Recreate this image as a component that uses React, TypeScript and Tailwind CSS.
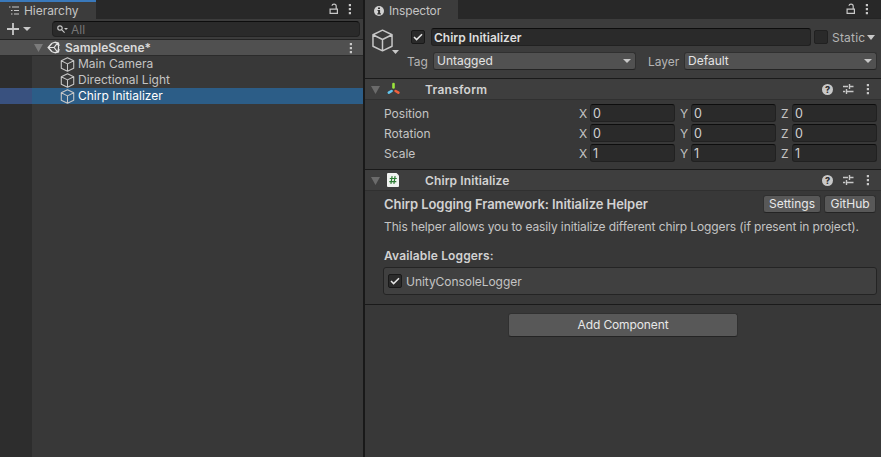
import type { ReactNode } from "react";

const Cube = ({ size, stroke = 1.1 }: { size: number; stroke?: number }) => (
  <svg width={size} height={size} viewBox="0 0 14 14" fill="none" stroke="#c8c8c8" strokeWidth={stroke} strokeLinejoin="round" className="shrink-0">
    <path d="M7 .7 12.8 3.5v7L7 13.3 1.2 10.5v-7z M1.2 3.5 7 6.4l5.8-2.9 M7 6.4v6.9" />
  </svg>
);

const Kebab = () => (
  <svg width="4" height="12" viewBox="0 0 4 12" fill="#c8c8c8" className="shrink-0">
    <path d="M.8 1h2.2v2.2H.8zM.8 5h2.2v2.2H.8zM.8 9h2.2v2.2H.8z" />
  </svg>
);

const Lock = () => (
  <svg width="10" height="12" viewBox="0 0 10 12" fill="none" stroke="#c8c8c8" strokeWidth="1.2" className="shrink-0">
    <path d="M1.1 6.1h7.3v4.3H1.1z M7.2 6V3.2Q7.2 1.2 5 1.2Q3.2 1.2 3 2.8" />
  </svg>
);

const Caret = ({ color = "#c8c8c8", w = 8, h = 4 }: { color?: string; w?: number; h?: number }) => (
  <svg width={w} height={h} viewBox="0 0 8 4" preserveAspectRatio="none" fill={color} className="shrink-0">
    <path d="M0 0h8L4 4z" />
  </svg>
);

const Check = () => (
  <span className="flex h-[14px] w-[14px] shrink-0 items-center justify-center rounded-[2px] border border-[#191919] bg-[#2a2a2a]">
    <svg width="10" height="8" viewBox="0 0 10 8" fill="none" stroke="#e6e6e6" strokeWidth="1.5">
      <path d="M1 4 3.6 6.6 9 1.2" />
    </svg>
  </span>
);

const UnityLogo = () => (
  <svg width="13" height="13" viewBox="0 0 13 13" fill="none" stroke="#e4e4e4" className="shrink-0">
    <path d="M5 2.2 1.2 6.5 5 10.8 M7.8 1.3 11.4 2.1 12 5.2 M7.8 11.7 11.4 10.9 12 7.8" strokeWidth="1.4" />
    <path d="M1.2 6.5h5.9 M7.1 6.5l3.5-4.6 M7.1 6.5l3.5 4.6 M5 2.2 8 1.3 M5 10.8l3 .9 M11 2.5l.6 4-.6 4" strokeWidth="1.2" />
  </svg>
);

const AxisIcon = () => (
  <svg width="14" height="14" viewBox="0 0 14 14" fill="none" strokeWidth="2.6" strokeLinecap="round" className="shrink-0">
    <path d="M6.5 2v3.4" stroke="#9be53c" />
    <path d="M4.6 9 1.8 10.7" stroke="#62c6ef" />
    <path d="m8.6 9 2.8 1.7" stroke="#f2613c" />
  </svg>
);

const ScriptIcon = () => (
  <svg width="12" height="14" viewBox="0 0 12 14" className="shrink-0">
    <path d="M1 0h8.5L12 2.5V13q0 1-1 1H1q-1 0-1-1V1q0-1 1-1z" fill="#f1f3f1" />
    <path d="M5.1 3.2 3.9 10.8 M8.1 3.2 6.9 10.8 M2.8 5.5h7 M2.3 8.6h7" stroke="#2f7d36" strokeWidth="1.2" fill="none" />
  </svg>
);

const HeaderTools = () => (
  <div className="ml-auto flex items-center pr-[11px]">
    <span className="mr-[9px] flex h-[11px] w-[11px] items-center justify-center rounded-full bg-[#c8c8c8] text-[9px] leading-none font-extrabold text-[#303030]">?</span>
    <svg width="12" height="12" viewBox="0 0 12 12" fill="none" stroke="#c8c8c8" strokeWidth="1.4" className="mr-[12px]">
      <path d="M1 3.5h5 M7.5 3.5h4 M7.5 1v5 M1 8.5h2.2 M4.5 8.5h7 M4.5 6v5" />
    </svg>
    <Kebab />
  </div>
);

const ComponentHeader = ({ icon, title }: { icon: ReactNode; title: ReactNode }) => (
  <div className="flex h-[21px] items-center border-b border-[#303030] bg-[#3e3e3e] pl-[6px]">
    <span className="flex pt-px"><Caret color="#6b6b6b" w={9} h={8} /></span>
    <span className="ml-[6px] flex w-[39px] pl-px">{icon}</span>
    <span className="pt-[2px] font-semibold tracking-[0.1px] text-[#d2d2d2]">{title}</span>
    <HeaderTools />
  </div>
);

const Field = ({ axis, value }: { axis: string; value: number }) => (
  <div className="flex w-[101px] items-center">
    <span className="w-[12px] pt-[2px] pl-px">{axis}</span>
    <span className="flex h-[18px] w-[85px] items-center rounded-[3px] border border-[#212121] border-t-[#0d0d0d] bg-[#2a2a2a] pt-[2px] pl-[2px] text-[12.5px] text-[#d2d2d2]">{value}</span>
  </div>
);

const VectorRow = ({ label, value }: { label: string; value: number }) => (
  <div className="flex h-[18px] items-center pl-[19px]">
    <span className="w-[194px] pt-[2px]">{label}</span>
    <Field axis="X" value={value} />
    <Field axis="Y" value={value} />
    <Field axis="Z" value={value} />
  </div>
);

const Dropdown = ({ label }: { label: string }) => (
  <span className="flex h-[18px] items-center justify-between rounded-[3px] border border-[#303030] border-b-[#242424] bg-[#515151] pr-[4px] pl-[3px] text-[#e4e4e4]">
    {label}
    <Caret />
  </span>
);

const HierarchyRow = ({ label, selected = false }: { label: string; selected?: boolean }) => (
  <div className="flex h-4">
    <div className={selected ? "w-8 bg-[#39517f]" : "w-8 bg-[#2d2d2d]"} />
    <div className={selected ? "flex flex-1 items-center bg-[#2c5d87] pl-7 text-white" : "flex flex-1 items-center pl-7"}>
      <Cube size={15} stroke={1} />
      <span className="ml-[3px]">{label}</span>
    </div>
  </div>
);

const Hierarchy = () => (
  <section className="flex w-[363px] flex-col bg-[#383838]">
    <div className="flex h-[19px] bg-[#282828]">
      <div className="flex w-24 items-center border-t-2 border-[#3a79bb] bg-[#3c3c3c] pl-[9px]">
        <svg width="11" height="9" viewBox="0 0 11 9" fill="none" stroke="#c8c8c8" strokeWidth="1.1">
          <path d="M0 1h1.5 M3 1h7 M2 4.5h1.5 M5 4.5h5 M2 8h1.5 M5 8h5" />
        </svg>
        <span className="ml-[4px] tracking-[-0.05px]">Hierarchy</span>
      </div>
      <div className="ml-auto flex items-center gap-[9px] border-b border-[#242424] pr-[11px]">
        <Lock />
        <Kebab />
      </div>
    </div>
    <div className="flex h-[21px] items-center border-b border-[#232323] bg-[#3c3c3c] pr-[3px] pl-[7px]">
      <svg width="12" height="12" viewBox="0 0 12 12" stroke="#c8c8c8" strokeWidth="1.8">
        <path d="M6 0v12 M0 6h12" />
      </svg>
      <span className="ml-[4px] flex w-[29px]"><Caret w={8} h={4} /></span>
      <div className="flex h-[16px] flex-1 items-center rounded-[4px] border border-[#212121] border-t-[#0d0d0d] bg-[#2a2a2a] pl-[4px] text-[#767676]">
        <svg width="11" height="9" viewBox="0 0 11 9" fill="none" stroke="#c8c8c8" strokeWidth="1.2">
          <circle cx="3" cy="3" r="2.2" />
          <path d="m4.6 4.6 3 3" />
          <path d="M7 3h4L9 5z" fill="#c8c8c8" stroke="none" />
        </svg>
        <span className="ml-[3px] pt-px">All</span>
      </div>
    </div>
    <div className="flex h-4 items-center border-b border-[#2b2b2b] bg-[#505050] pr-[10px] pl-[34px]">
      <Caret color="#7b7b7b" w={9} h={8} />
      <span className="ml-[4px]"><UnityLogo /></span>
      <span className="ml-[5px] font-semibold text-[#dadada]">SampleScene*</span>
      <span className="ml-auto"><Kebab /></span>
    </div>
    <HierarchyRow label="Main Camera" />
    <HierarchyRow label="Directional Light" />
    <HierarchyRow label="Chirp Initializer" selected />
    <div className="w-8 flex-1 bg-[#2d2d2d]" />
  </section>
);

const Inspector = () => (
  <section className="flex w-[516px] flex-col bg-[#383838]">
    <div className="flex h-[19px] bg-[#282828]">
      <div className="flex w-[93px] items-center bg-[#3c3c3c] pt-[2px] pl-[9px]">
        <svg width="10" height="10" viewBox="0 0 10 10">
          <circle cx="5" cy="5" r="5" fill="#d2d2d2" />
          <path d="M4 1.5h2v1.6H4zM3.5 4h2.6v3.3h.8v1.1H3.3V7.3h.8V5h-.6z" fill="#333" />
        </svg>
        <span className="ml-[5px] tracking-[-0.15px]">Inspector</span>
      </div>
      <div className="ml-auto flex items-center gap-[9px] border-b border-[#242424] pr-[12px]">
        <Lock />
        <Kebab />
      </div>
    </div>
    <div className="flex h-[60px] border-b border-[#1a1a1a] bg-[#3c3c3c]">
      <div className="flex w-[46px] pt-[10px] pl-[6px]">
        <Cube size={23} stroke={0.9} />
        <span className="mt-[21px] -ml-[2px]"><Caret w={7} h={4} /></span>
      </div>
      <div className="flex-1">
        <div className="mt-[9px] flex h-[18px] items-center">
          <Check />
          <span className="ml-[6px] flex h-[18px] w-[380px] items-center rounded-[3px] border border-[#212121] border-t-[#0d0d0d] bg-[#2a2a2a] pt-px pl-[2px] font-semibold text-[#dedede]">Chirp Initializer</span>
          <span className="ml-[3px] h-[14px] w-[14px] rounded-[2px] border border-[#212121] bg-[#2a2a2a]" />
          <span className="ml-[4px] w-[35px] pt-px tracking-[0.2px] text-[#b4b4b4]">Static</span>
          <Caret w={8} h={5} />
        </div>
        <div className="mt-[6px] grid h-[18px] grid-cols-[22px_203px_48px_193px] items-center">
          <span className="-ml-[4px] pt-[2px] text-[#b4b4b4]">Tag</span>
          <Dropdown label="Untagged" />
          <span className="pt-[2px] pl-[12px] text-[#b4b4b4]">Layer</span>
          <Dropdown label="Default" />
        </div>
      </div>
    </div>
    <ComponentHeader icon={<AxisIcon />} title={<span className="tracking-[0.25px]">Transform</span>} />
    <div className="flex h-[70px] flex-col gap-[2px] border-b border-[#1a1a1a] pt-[4px]">
      <VectorRow label="Position" value={0} />
      <VectorRow label="Rotation" value={0} />
      <VectorRow label="Scale" value={1} />
    </div>
    <ComponentHeader icon={<ScriptIcon />} title="Chirp Initialize" />
    <div className="h-[114px] border-b border-[#1a1a1a] pt-[4px] pr-[4px] pl-[18px]">
      <div className="flex h-[18px] items-center gap-[3px] pr-px pl-px">
        <h2 className="mr-auto text-[13px] font-semibold tracking-[-0.07px] text-[#d2d2d2]">Chirp Logging Framework: Initialize Helper</h2>
        <button className="h-[18px] w-[58px] rounded-[3px] border border-[#303030] border-b-[#242424] bg-[#585858] leading-none whitespace-nowrap text-[#e8e8e8]">Settings</button>
        <button className="h-[18px] w-[52px] rounded-[3px] border border-[#303030] border-b-[#242424] bg-[#585858] leading-none text-[#e8e8e8]">GitHub</button>
      </div>
      <p className="mt-[6px] pl-px tracking-[-0.11px] whitespace-nowrap">This helper allows you to easily initialize different chirp Loggers (if present in project).</p>
      <h3 className="mt-[13px] pl-px font-semibold tracking-[0.15px] text-[#d2d2d2]">Available Loggers:</h3>
      <div className="mt-[3px] flex h-[28px] items-center rounded-[3px] border border-[#242424] bg-[#404040] pl-[4px]">
        <Check />
        <span className="ml-[4px] pt-px tracking-[-0.05px]">UnityConsoleLogger</span>
      </div>
    </div>
    <button className="mt-[8px] ml-[143px] h-[24px] w-[230px] rounded-[3px] border border-[#303030] border-b-[#242424] bg-[#585858] leading-none tracking-[-0.12px] text-[#e8e8e8]">Add Component</button>
  </section>
);

export default function App() {
  return (
    <main className="flex h-[457px] w-[881px] gap-[2px] overflow-hidden bg-[#191919] font-['Inter',sans-serif] text-[12px] leading-4 text-[#c4c4c4]">
      <Hierarchy />
      <Inspector />
    </main>
  );
}
